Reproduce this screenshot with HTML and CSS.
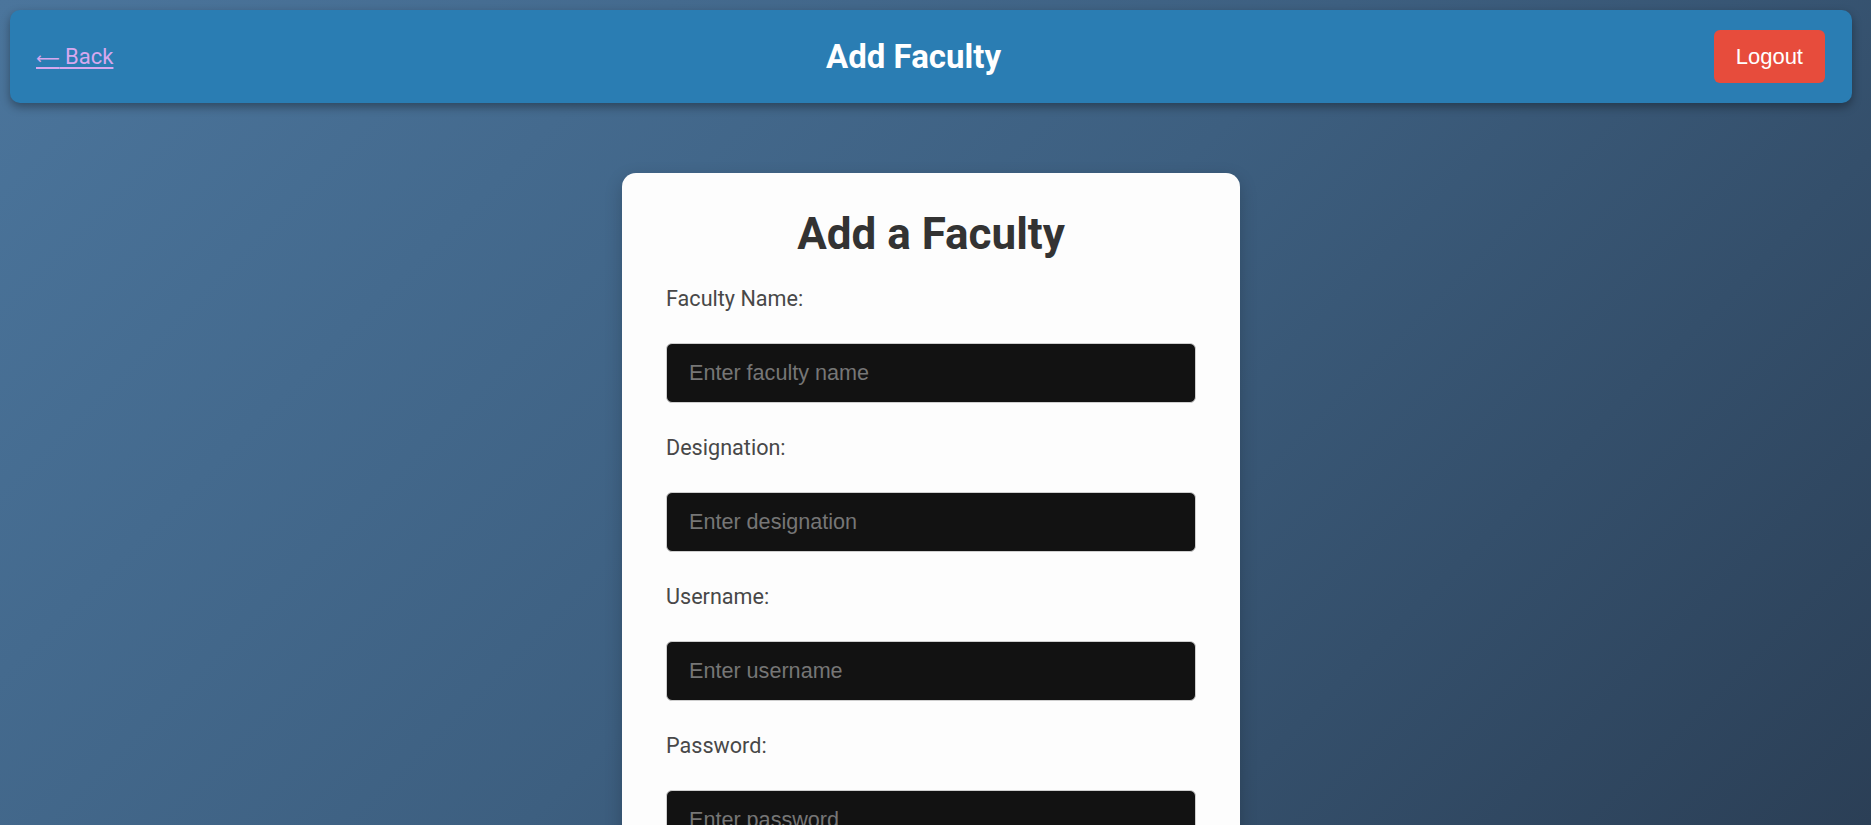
FILE: index.html
```html
<!DOCTYPE html>
<html lang="en">
<head>
<meta charset="utf-8">
<title>Add Faculty</title>
<link rel="stylesheet" href="styles.css">
</head>
<body>
  <header class="topbar">
    <a class="back-link" href="#"><span class="back-arrow">⟵</span> Back</a>
    <h1 class="topbar-title">Add Faculty</h1>
    <button class="logout-btn" type="button">Logout</button>
  </header>
  <main class="page">
    <form class="card">
      <h2 class="card-title">Add a Faculty</h2>
      <label class="field-label" for="fname">Faculty Name:</label>
      <input class="field-input" id="fname" type="text" placeholder="Enter faculty name">
      <label class="field-label" for="desig">Designation:</label>
      <input class="field-input" id="desig" type="text" placeholder="Enter designation">
      <label class="field-label" for="uname">Username:</label>
      <input class="field-input" id="uname" type="text" placeholder="Enter username">
      <label class="field-label" for="pwd">Password:</label>
      <input class="field-input" id="pwd" type="password" placeholder="Enter password">
      <button class="submit-btn" type="submit">Add Faculty</button>
    </form>
  </main>
</body>
</html>
```

FILE: styles.css
```css
html {
  min-height: 100%;
  background: linear-gradient(135deg, #4b759c 0%, #3d5f80 50%, #2b3f56 100%);
  background-attachment: fixed;
}
body {
  margin: 0;
  padding: 10px 19px 40px 10px;
  font-family: Roboto, "Liberation Sans", Arial, sans-serif;
}
.topbar {
  display: flex;
  align-items: center;
  justify-content: space-between;
  height: 93px;
  box-sizing: border-box;
  padding: 0 27px 0 26px;
  background: #2a7db3;
  border-radius: 10px;
  box-shadow: 0 4px 10px rgba(0, 0, 0, 0.35);
}
.back-link {
  color: #d6a8ee;
  font-size: 22px;
  text-decoration: underline;
  text-underline-offset: 3px;
}
.back-arrow {
  font-family: "DejaVu Sans", sans-serif;
  font-size: 16.5px;
}
.topbar-title {
  margin: 0;
  color: #ffffff;
  font-size: 33px;
  font-weight: 700;
}
.logout-btn {
  font-family: "Liberation Sans", Arial, sans-serif;
  font-size: 22px;
  color: #ffffff;
  background: #e74c3c;
  border: none;
  border-radius: 6px;
  height: 53px;
  padding: 0 22px;
}
.page {
  display: flex;
  justify-content: center;
  padding-top: 70px;
}
.card {
  width: 618px;
  box-sizing: border-box;
  padding: 35px 44px 44px 44px;
  background: #fdfdfd;
  border-radius: 14px;
  box-shadow: 0 6px 18px rgba(0, 0, 0, 0.2);
  display: flex;
  flex-direction: column;
}
.card-title {
  margin: 0 0 26px;
  text-align: center;
  color: #333333;
  font-size: 44px;
  font-weight: 700;
}
.field-label {
  color: #484848;
  font-size: 21.6px;
  margin-bottom: 32px;
}
.field-input {
  box-sizing: border-box;
  height: 60px;
  margin: 0 0 32px;
  padding: 0 22px;
  font-family: "Liberation Sans", Arial, sans-serif;
  font-size: 21.6px;
  color: #eeeeee;
  background: #121212;
  border: 1px solid #cfcfcf;
  border-radius: 6px;
}
.field-input::placeholder {
  color: #767676;
}
.submit-btn {
  height: 58px;
  font-size: 22px;
  color: #ffffff;
  background: #2a7db3;
  border: none;
  border-radius: 6px;
}
```
